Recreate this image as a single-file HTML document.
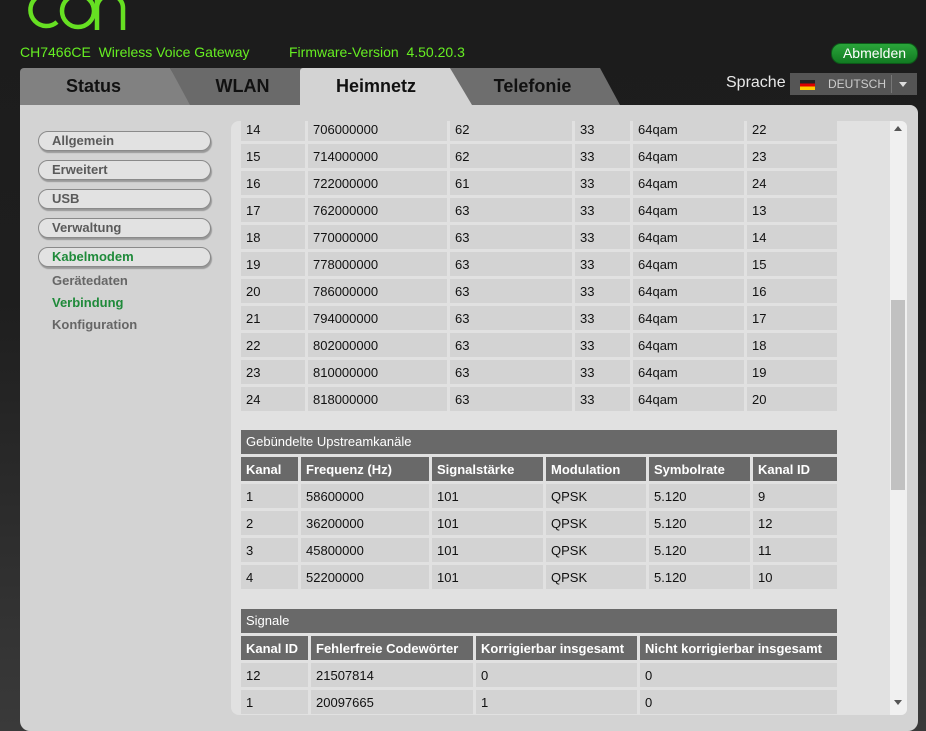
<!DOCTYPE html>
<html><head><meta charset="utf-8"><style>
*{margin:0;padding:0;box-sizing:border-box}
body{width:926px;height:731px;overflow:hidden;position:relative;font-family:"Liberation Sans",Arial,sans-serif;background:linear-gradient(to bottom,#1c1c1c 0,#1e1e1e 300px,#3a3a3a 731px)}
.abs{position:absolute}
.hdr{color:#66ee22;font-size:14px;top:44px}
.tab{position:absolute;top:68px;height:37px;font-weight:bold;font-size:18px;line-height:36px;color:#111;text-align:center}
.pill{position:absolute;left:38px;width:173px;height:20px;border:1px solid #8a8a8a;border-radius:10px;background:#e2e2e2;box-shadow:1px 2px 1px #999;font-weight:bold;font-size:13px;color:#5a5a5a;padding-left:13px;line-height:18px}
.sub{position:absolute;left:52px;font-weight:bold;font-size:13px;color:#666}
table{position:absolute;border-collapse:separate;border-spacing:3px;table-layout:fixed;font-size:13px;color:#111}
td,th{height:24px;background:#d3d3d3;padding-left:5px;text-align:left;white-space:nowrap;overflow:hidden}
th{background:#696969;color:#fff;font-weight:bold}
.title{position:absolute;left:241px;width:596px;height:24px;background:#696969;color:#fff;font-size:13px;line-height:24px;padding-left:5px}
</style></head><body>
<svg class="abs" style="left:0;top:0" width="140" height="40"><g fill="none" stroke="#66e022" stroke-width="4.5">
<path d="M57,-2 A16,16 0 1 0 57,22"/>
<circle cx="78" cy="11" r="16"/>
<path d="M97,30 V-6 M97,8 A13,13 0 0 1 123,8 V30"/></g></svg>
<div class="abs hdr" style="left:20px">CH7466CE&nbsp; Wireless Voice Gateway</div>
<div class="abs hdr" style="left:289px">Firmware-Version&nbsp; 4.50.20.3</div>
<div class="abs" style="left:831px;top:43px;width:87px;height:21px;border-radius:10px;background:linear-gradient(#2aa53a,#127a22);border:1px solid #0c5a18;color:#fff;font-size:14px;text-align:center;line-height:19px">Abmelden</div>
<div class="abs" style="left:726px;top:74px;color:#e8e8e8;font-size:16px">Sprache</div>
<div class="abs" style="left:790px;top:73px;width:127px;height:22px;background:#555;"></div>
<div class="abs" style="left:800px;top:80px;width:15px;height:10px;background:linear-gradient(#222 0,#222 33%,#d00 33%,#d00 66%,#fc0 66%)"></div>
<div class="abs" style="left:828px;top:77px;color:#ccc;font-size:12px">DEUTSCH</div>
<div class="abs" style="left:891px;top:75px;width:1px;height:18px;background:#777"></div>
<div class="abs" style="left:899px;top:82px;width:0;height:0;border-left:4px solid transparent;border-right:4px solid transparent;border-top:5px solid #ddd"></div>

<div class="tab" style="left:20px;width:172px;background:#818181;clip-path:polygon(0 0,150px 0,172px 100%,0 100%);border-top-left-radius:4px;padding-right:25px">Status</div>
<div class="tab" style="left:170px;width:135px;background:#6a6a6a;clip-path:polygon(0 0,135px 0,135px 100%,20px 100%);padding-left:10px">WLAN</div>
<div class="tab" style="left:450px;width:170px;background:#6e6e6e;clip-path:polygon(0 0,150px 0,170px 100%,20px 100%);border-top-right-radius:4px;padding-right:5px">Telefonie</div>
<div class="tab" style="left:300px;width:172px;background:#d3d3d3;clip-path:polygon(0 0,150px 0,172px 100%,0 100%);border-top-left-radius:3px;padding-right:20px">Heimnetz</div>

<div class="abs" style="left:20px;top:105px;width:898px;height:626px;background:#d3d3d3;border-radius:0 8px 10px 10px"></div>
<div class="pill" style="top:131px">Allgemein</div>
<div class="pill" style="top:160px">Erweitert</div>
<div class="pill" style="top:189px">USB</div>
<div class="pill" style="top:218px">Verwaltung</div>
<div class="pill" style="top:247px;color:#1f8a3a">Kabelmodem</div>
<div class="sub" style="top:273px">Gerätedaten</div>
<div class="sub" style="top:295px;color:#1f8a3a">Verbindung</div>
<div class="sub" style="top:317px">Konfiguration</div>

<div class="abs" style="left:231px;top:121px;width:676px;height:594px;background:#e1e1e1;border-radius:8px 6px 6px 8px;overflow:hidden">
<div class="abs" style="left:659px;top:0;width:17px;height:594px;background:#f0f0f0"></div>
<div class="abs" style="left:660px;top:179px;width:14px;height:190px;background:#c1c1c1"></div>
<div class="abs" style="left:663px;top:5px;border-left:4px solid transparent;border-right:4px solid transparent;border-bottom:5px solid #555"></div>
<div class="abs" style="left:663px;top:579px;border-left:4px solid transparent;border-right:4px solid transparent;border-top:5px solid #555"></div>
</div>

<div class="abs" style="left:231px;top:121px;width:659px;height:594px;overflow:hidden">
<table style="left:7px;top:-7px;width:602px">
<colgroup><col style="width:64px"><col style="width:139px"><col style="width:122px"><col style="width:55px"><col style="width:111px"><col style="width:90px"></colgroup>
<tr><td>14</td><td>706000000</td><td>62</td><td>33</td><td>64qam</td><td>22</td></tr>
<tr><td>15</td><td>714000000</td><td>62</td><td>33</td><td>64qam</td><td>23</td></tr>
<tr><td>16</td><td>722000000</td><td>61</td><td>33</td><td>64qam</td><td>24</td></tr>
<tr><td>17</td><td>762000000</td><td>63</td><td>33</td><td>64qam</td><td>13</td></tr>
<tr><td>18</td><td>770000000</td><td>63</td><td>33</td><td>64qam</td><td>14</td></tr>
<tr><td>19</td><td>778000000</td><td>63</td><td>33</td><td>64qam</td><td>15</td></tr>
<tr><td>20</td><td>786000000</td><td>63</td><td>33</td><td>64qam</td><td>16</td></tr>
<tr><td>21</td><td>794000000</td><td>63</td><td>33</td><td>64qam</td><td>17</td></tr>
<tr><td>22</td><td>802000000</td><td>63</td><td>33</td><td>64qam</td><td>18</td></tr>
<tr><td>23</td><td>810000000</td><td>63</td><td>33</td><td>64qam</td><td>19</td></tr>
<tr><td>24</td><td>818000000</td><td>63</td><td>33</td><td>64qam</td><td>20</td></tr>
</table>
<div class="title" style="left:10px;top:309px">Gebündelte Upstreamkanäle</div>
<table style="left:7px;top:333px;width:602px">
<colgroup><col style="width:57px"><col style="width:128px"><col style="width:111px"><col style="width:100px"><col style="width:101px"><col style="width:84px"></colgroup>
<tr><th>Kanal</th><th>Frequenz (Hz)</th><th>Signalstärke</th><th>Modulation</th><th>Symbolrate</th><th>Kanal ID</th></tr>
<tr><td>1</td><td>58600000</td><td>101</td><td>QPSK</td><td>5.120</td><td>9</td></tr>
<tr><td>2</td><td>36200000</td><td>101</td><td>QPSK</td><td>5.120</td><td>12</td></tr>
<tr><td>3</td><td>45800000</td><td>101</td><td>QPSK</td><td>5.120</td><td>11</td></tr>
<tr><td>4</td><td>52200000</td><td>101</td><td>QPSK</td><td>5.120</td><td>10</td></tr>
</table>
<div class="title" style="left:10px;top:488px">Signale</div>
<table style="left:7px;top:512px;width:602px">
<colgroup><col style="width:67px"><col style="width:162px"><col style="width:161px"><col style="width:197px"></colgroup>
<tr><th>Kanal ID</th><th>Fehlerfreie Codewörter</th><th>Korrigierbar insgesamt</th><th>Nicht korrigierbar insgesamt</th></tr>
<tr><td>12</td><td>21507814</td><td>0</td><td>0</td></tr>
<tr><td>1</td><td>20097665</td><td>1</td><td>0</td></tr>
</table>
</div>
</body></html>
